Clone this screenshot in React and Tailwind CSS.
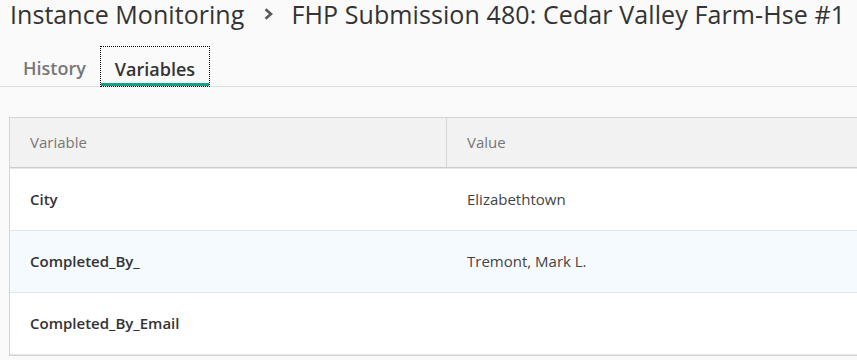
import React from 'react';

const rows = [
  { name: 'City', value: 'Elizabethtown' },
  { name: 'Completed_By_', value: 'Tremont, Mark L.', highlight: true },
  { name: 'Completed_By_Email', value: '' },
];

const InstanceVariables = () => {
  return (
    <div className="min-h-screen w-full overflow-hidden bg-[#fafafa] font-['Open_Sans',sans-serif]">
      {/* Breadcrumb title */}
      <div className="flex items-center pl-[10px] h-[28px] text-[25px] leading-[28px] text-[#333] whitespace-nowrap">
        <span className="tracking-[0.05px]">Instance Monitoring</span>
        <svg className="ml-[19px] mr-[17px] mt-[-1px]" width="11" height="12" viewBox="0 0 11 12">
          <path d="M2.5 1.2 L8 6 L2.5 10.8" fill="none" stroke="#5a5a5a" strokeWidth="2.6" />
        </svg>
        <span className="tracking-[0.1px]">FHP Submission 480: Cedar Valley Farm-Hse #1</span>
      </div>

      {/* Tabs */}
      <div className="mt-[18px] flex h-[41px] border-b border-[#dddddd] pl-[8px]">
        <button className="h-[40px] pl-[15px] pr-[14px] pt-[4px] text-[18px] leading-[24px] font-semibold text-[#777]">
          History
        </button>
        <button className="relative h-[41px] px-[14px] pt-[4px] text-[18px] leading-[24px] font-semibold text-[#333] border border-dotted border-black">
          Variables
          <span className="absolute left-0 right-0 bottom-0 h-[3px] bg-[#13a085]"></span>
        </button>
      </div>

      {/* Table card */}
      <div className="mt-[30px] ml-[9px] w-[900px] border border-[#d4d4d4] bg-white">
        <div className="flex h-[50px] bg-[#f2f2f2] border-b border-[#cccccc] shadow-[0_1px_0_#e8e8e8] text-[15px] text-[#777]">
          <div className="w-[437px] flex items-center px-[20px] border-r border-[#d6d6d6]">Variable</div>
          <div className="flex-1 flex items-center px-[20px]">Value</div>
        </div>
        <div className="mt-px">
          {rows.map((row, i) => (
            <div
              key={i}
              className={`flex h-[62px] border-b border-[#e3e6e9] text-[15px] ${row.highlight ? 'bg-[#f5faff]' : 'bg-white'}`}
            >
              <div className="w-[437px] flex items-center px-[20px] font-semibold text-[#333]">{row.name}</div>
              <div className="flex-1 flex items-center px-[20px] text-[#444]">{row.value}</div>
            </div>
          ))}
        </div>
      </div>
    </div>
  );
};

export default InstanceVariables;
